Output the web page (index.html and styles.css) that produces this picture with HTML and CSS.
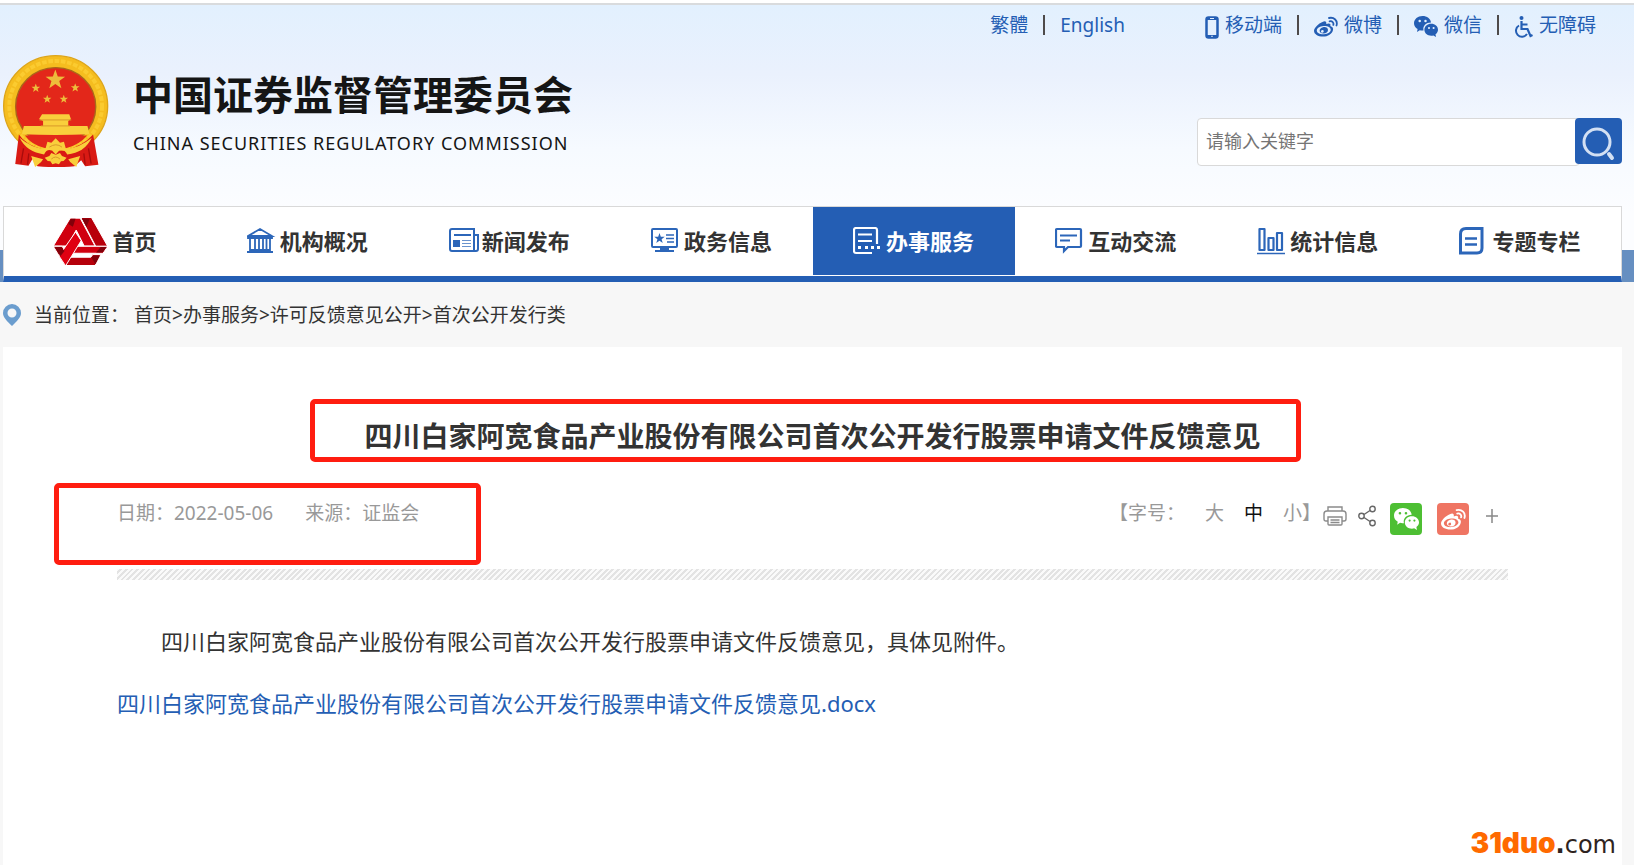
FILE: index.html
```html
<!DOCTYPE html>
<html lang="zh-CN">
<head>
<meta charset="utf-8">
<title>中国证券监督管理委员会</title>
<link rel="stylesheet" href="styles.css">
</head>
<body>
<svg class="defs" aria-hidden="true">
  <symbol id="star" viewBox="-10 -10 20 20"><path d="M0-10 2.400-3.200 9.500-3.100 3.800 1.200 5.900 8.100 0 4-5.900 8.100-3.800 1.200-9.500-3.100-2.400-3.200z"/></symbol>
  <symbol id="weibo" viewBox="0 0 24 22">
    <path fill="currentColor" fill-rule="evenodd" d="M8.500 6C11 4.600 12.700 5.300 12.300 8c2.600-1.100 5-.5 4 2 2.200.7 3.200 2 2.700 4-.9 4-5 6.600-10 6.600C4 20.600 0 18.300 0 14.800 0 12 4.500 7.500 8.500 6zM9.600 10c-4 .3-7 2.400-6.800 4.800.2 2.300 3.300 3.800 7.200 3.500 4-.3 7-2.400 6.700-4.800-.2-2.300-3.200-3.800-7.100-3.500z"/>
    <path fill="currentColor" fill-rule="evenodd" d="M9 11.200c2.600-.7 5 .5 5 2.800 0 2.200-2 3.600-4.500 3.600-2.300 0-4-1.200-3.900-3 .1-1.600 1.500-2.900 3.400-3.400zM8.300 14a1.400 1.400 0 1 0 .1 2.800A1.400 1.400 0 0 0 8.300 14z"/>
    <path fill="none" stroke="currentColor" stroke-width="1.800" stroke-linecap="round" d="M15 2c5-1.200 9 2.700 7.500 7.500M15.600 5.300c2.600-.6 4.400 1.300 3.700 3.600"/>
  </symbol>
  <symbol id="wechat" viewBox="0 0 24 22">
    <path fill="currentColor" fill-rule="evenodd" d="M8.500 0C13 0 16.500 2.600 17 6.500c-5 0-8.500 3.500-7.500 8-1.200.2-2.500.1-3.700-.3L3 16l.6-2.900C1.300 11.700 0 9.700 0 7.300 0 3.200 3.800 0 8.500 0zM5.700 3.800a1.200 1.200 0 1 0 0 2.500 1.200 1.200 0 0 0 0-2.500zm5.800 0a1.200 1.200 0 1 0 0 2.500 1.200 1.200 0 0 0 0-2.500z"/>
    <path fill="currentColor" fill-rule="evenodd" d="M17.200 7.800c3.800 0 6.800 2.600 6.800 5.900 0 1.900-1 3.500-2.500 4.600l.5 2.700-2.600-1.500c-4.700 1.200-9-1.700-9-5.700 0-3.400 3-6 6.800-6zM15 11a1 1 0 1 0 0 2.100 1 1 0 0 0 0-2.100zm4.600 0a1 1 0 1 0 0 2.100 1 1 0 0 0 0-2.100z"/>
  </symbol>
</svg>

<header class="header">
  <nav class="toplinks" aria-label="快捷链接">
    <div class="group">
      <a href="#">繁體</a><span class="sep"></span><a href="#">English</a>
    </div>
    <div class="group">
      <a href="#"><svg class="i-phone" viewBox="0 0 14 23"><rect x="1.500" y="1.500" width="11" height="20" rx="2" fill="none" stroke="currentColor" stroke-width="2.500"/><path d="M2 2h10v2H2zM2 19h10v2H2z" fill="currentColor"/><path d="M5 2.500h4M6.200 20.300h1.600" stroke="#e4effd"/></svg>移动端</a><span class="sep"></span>
      <a href="#"><svg class="i-social"><use href="#weibo"/></svg>微博</a><span class="sep"></span>
      <a href="#"><svg class="i-social"><use href="#wechat"/></svg>微信</a><span class="sep"></span>
      <a href="#"><svg class="i-access" viewBox="0 0 19 22"><circle cx="7.500" cy="2" r="2" fill="currentColor"/><path d="M7.500 5v8h6l3 7 2-1M8 8.500h5.500" fill="none" stroke="currentColor" stroke-width="2.200"/><path d="M5 9.500a6 6 0 1 0 8 8.500" fill="none" stroke="currentColor" stroke-width="2"/></svg>无障碍</a>
    </div>
  </nav>

  <div class="masthead">
    <a class="brand" href="#">
      <svg class="emblem" viewBox="10 28 320 338" aria-hidden="true">
        <ellipse cx="169" cy="182" rx="157" ry="152" fill="#f5bd1f" stroke="#dda51a" stroke-width="4"/>
        <ellipse cx="169" cy="182" rx="140" ry="136" fill="none" stroke="#fbcb30" stroke-width="12" stroke-dasharray="14 5"/>
        <ellipse cx="169" cy="184" rx="121" ry="118" fill="#e3271a" stroke="#a9681a" stroke-width="4"/>
        <g fill="#edbd3b"><use href="#star" x="137" y="72" width="62" height="62"/><use href="#star" x="95" y="114" width="28" height="28"/><use href="#star" x="214" y="113" width="28" height="28"/><use href="#star" x="130" y="148" width="27" height="27"/><use href="#star" x="180" y="148" width="27" height="27"/></g>
        <path fill="#f9cf3c" d="M128 207h82l5 14-8 6v15h58l6 25q-102 5-204 0l6-25h58v-15l-12-6z"/>
        <path d="M120 224h96M124 242h88" stroke="#d9992a" stroke-width="3"/>
        <path fill="#d91a14" d="M58 268q20 32 76 46l60 3q58-14 88-49l16 91-40 5-12-18-20 18q-55 5-112 0l-15-22-12 20-40-5z"/>
        <path fill="#e3271a" d="M76 271h188q-24 28-62 38h-66q-40-10-60-38z"/>
        <path fill="#f9cf3c" d="M60 278q38 32 78 34l6-22 12 3 13-14 13 14 12-3 6 22q42-4 78-34-22 46-74 50-10-18-24-12l-11 12-11-12q-16-6-24 12-52-6-74-50z"/>
        <path fill="#f9cf3c" d="M136 338l14-5 6-9 13 5 13-5 6 9 14 5-9 10-8 1-6 9-10-3-10 3-6-9-8-1zM95 333l36 10-6 8-18 15zM243 333l-36 10 6 8 18 15z"/>
        <path d="M72 310l-8 46M88 325l-4 34M268 310l8 46M254 325l4 34" stroke="#a80c0c" stroke-width="4"/>
        <path d="M150 306q20-14 38 0M156 342q13-12 26 0" fill="none" stroke="#d9992a" stroke-width="3"/>
      </svg>
      <span class="brand-text">
        <span class="brand-cn">中国证券监督管理委员会</span>
        <span class="brand-en">CHINA SECURITIES REGULATORY COMMISSION</span>
      </span>
    </a>
    <form class="search" role="search">
      <input type="text" placeholder="请输入关键字" aria-label="关键字">
      <button type="button" aria-label="搜索"><svg viewBox="0 0 47 46"><circle cx="22" cy="24" r="13" fill="none" stroke="#d3e0f3" stroke-width="3"/><path d="M34 36l3 4" stroke="#d3e0f3" stroke-width="4" stroke-linecap="round"/></svg></button>
    </form>
  </div>

  <div class="navband">
    <nav class="mainnav" aria-label="主导航">
      <a href="#"><svg class="i-home" viewBox="13 12 160 141">
        <g stroke="#fff" stroke-width="3">
          <path fill="#d0000f" d="M62 12h30l45 84h-33L80 48 54 96H11z"/>
          <path fill="#b8000b" d="M94 10h32l49 87h-36z"/>
          <path fill="#b5000b" d="M11 97h26l25 33h62l6-8h24l-17 33H46z"/>
          <path fill="#d0000f" d="M80 97h95l-14 21H68z"/>
          <path fill="#e00012" d="M78 54l17 26-47 76-20-30z"/>
        </g>
        <path fill="#82000a" d="M64 14h14l-8 24-14-8zM97 13h24l-10 26zM15 99h20l10 12-13 16zM172 99l-12 17h-20l14-17zM132 125h20l-14 26-12-20z"/>
      </svg>首页</a>
      <a href="#"><svg class="i-nav" viewBox="0 0 33 28"><path d="M1 9l12-7 12 7zM1 9v2h24V9M3 25V12M23 25V12M8 12v12M12 12v12M16 12v12M19.500 12v12M0 25h26M3 23h20" fill="none" stroke="currentColor" stroke-width="1.800"/></svg>机构概况</a>
      <a href="#"><svg class="i-nav" viewBox="0 0 33 28"><path d="M25 24H3q-2 0-2-2V4q0-2 2-2h22zM25 8h4v14q0 2-2 2h-2M5 8h17" fill="none" stroke="currentColor" stroke-width="2"/><path d="M4 13h7v7H4z" fill="currentColor"/><path d="M13 13.500h9M13 16.500h9M13 19.500h9" stroke="currentColor" opacity=".7"/></svg>新闻发布</a>
      <a href="#"><svg class="i-nav" viewBox="0 0 33 28"><rect x="1" y="2" width="25" height="18" rx="1" fill="none" stroke="currentColor" stroke-width="2"/><use href="#star" x="3" y="6" width="11" height="11" fill="currentColor"/><path d="M15 8h8M15 11.500h8M16 15h7" stroke="currentColor" stroke-width="1.400"/><path d="M9 20h9v3h5v2H4v-2h5z" fill="currentColor"/></svg>政务信息</a>
      <a href="#" class="active" aria-current="page"><svg class="i-nav" viewBox="0 0 33 28"><path d="M19 26H3q-2 0-2-2V3q0-2 2-2h19q2 0 2 2v14M5 7.500h14M5 14h14" fill="none" stroke="currentColor" stroke-width="2.200"/><path d="M5 20.500h3M12 20.500h3M18 20.500h3M24 20.500h3" stroke="currentColor" stroke-width="3"/></svg>办事服务</a>
      <a href="#"><svg class="i-nav" viewBox="0 0 33 28"><path d="M2 2h23q1 0 1 1v16q0 1-1 1H13l-4 4v-4H2q-1 0-1-1V3q0-1 1-1z" fill="none" stroke="currentColor" stroke-width="2.200"/><path d="M5 8.500h17M5 13.500h10" stroke="currentColor" stroke-width="2"/></svg>互动交流</a>
      <a href="#"><svg class="i-nav" viewBox="0 0 33 28"><path d="M2.500 2h5v21h-5zM11.500 11h5v12h-5zM20 6h5v17h-5z" fill="none" stroke="currentColor" stroke-width="2.200" stroke-linejoin="round"/><path d="M0 26.500h28" stroke="currentColor" stroke-width="1.500"/></svg>统计信息</a>
      <a href="#"><svg class="i-nav" viewBox="0 0 33 28"><path d="M7 1.500h16V21q0 5-5 5H1.500V7q0-5.500 5.500-5.500z" fill="none" stroke="currentColor" stroke-width="3"/><path d="M6 11.500h12M6 17.500h12" stroke="currentColor" stroke-width="2.500"/></svg>专题专栏</a>
    </nav>
  </div>
</header>

<main class="page">
  <nav class="crumbs" aria-label="当前位置">
    <svg class="i-pin" viewBox="0 0 18 22"><path fill="#6b9dce" fill-rule="evenodd" d="M9 0a9 9 0 0 1 9 9c0 4.500-4 8-9 13C4 17 0 13.500 0 9a9 9 0 0 1 9-9zm0 4.500a4.500 4.500 0 1 0 0 9 4.500 4.500 0 0 0 0-9z"/></svg>
    <span class="crumb-label">当前位置：</span>
    <span><a href="#">首页</a>&gt;<a href="#">办事服务</a>&gt;<a href="#">许可反馈意见公开</a>&gt;<a href="#">首次公开发行类</a></span>
  </nav>

  <article class="article">
    <div class="title-row">
      <h1>四川白家阿宽食品产业股份有限公司首次公开发行股票申请文件反馈意见</h1>
      <span class="mark mark-title"></span>
    </div>
    <div class="meta">
      <span>日期：2022-05-06</span>
      <span>来源：证监会</span>
      <div class="tools">
        <span class="sizes">【字号：<button type="button">大</button><button type="button" class="on">中</button><button type="button">小</button>】</span>
        <button type="button" aria-label="打印"><svg class="i-print" viewBox="0 0 24 22" fill="none" stroke="#8b8b8b" stroke-width="1.400"><path d="M5 6V2h14v4M5 16H3q-2 0-2-2V9q0-3 3-3h16q3 0 3 3v5q0 2-2 2h-2M5 12h14v7q0 1-1 1H6q-1 0-1-1zM7.500 15h9M7.500 17.500h9"/></svg></button>
        <button type="button" aria-label="分享"><svg class="i-share" viewBox="0 0 18 22" fill="none" stroke="#666" stroke-width="1.400"><circle cx="3.500" cy="11" r="2.700"/><circle cx="14.500" cy="4" r="2.700"/><circle cx="14.500" cy="18" r="2.700"/><path d="M6 9.500l6-4M6 12.500l6 4"/></svg></button>
        <button type="button" class="badge wechat" aria-label="分享到微信"><svg><use href="#wechat"/></svg></button>
        <button type="button" class="badge weibo" aria-label="分享到微博"><svg><use href="#weibo"/></svg></button>
        <button type="button" aria-label="更多"><svg class="i-plus" viewBox="0 0 12 16"><path d="M0 8h12M6 1v14" stroke="#888" stroke-width="1.500"/></svg></button>
      </div>
      <span class="mark mark-meta"></span>
    </div>
    <div class="stripe"></div>
    <p class="lead">四川白家阿宽食品产业股份有限公司首次公开发行股票申请文件反馈意见，具体见附件。</p>
    <p><a href="#">四川白家阿宽食品产业股份有限公司首次公开发行股票申请文件反馈意见.docx</a></p>
  </article>
  <div class="watermark"><b>31duo</b><strong>.</strong>com</div>
</main>
</body>
</html>
```

FILE: styles.css
```css
* { box-sizing: border-box; }
body {
  margin: 0;
  min-height: 100vh;
  display: flex;
  flex-direction: column;
  background: #f7f7f7;
  color: #333;
  font-family: "Noto Sans", "Noto Sans CJK SC", sans-serif;
  font-size: 19px;
  line-height: 28px;
}
a { color: inherit; text-decoration: none; }
button { padding: 0; border: 0; background: none; font: inherit; color: inherit; cursor: pointer; }
svg { display: block; flex: none; }
.defs { position: absolute; width: 0; height: 0; }

/* Header */
.header {
  margin-top: 3px;
  border-top: 2px solid #d9dbdd;
  background: linear-gradient(#e2f0fe, #eaf1fd 25%, #f6faff 52%, #fcfdff 75%);
  box-shadow: 0 -3px #fff;
}
.toplinks {
  display: flex;
  justify-content: flex-end;
  gap: 80px;
  padding: 6px 38px 0 0;
  color: #245eb4;
}
.group { display: flex; align-items: center; }
.group a { display: flex; align-items: center; gap: 6px; }
.sep { width: 2px; height: 20px; margin: 0 15px; background: #4e4a4a; }
.i-phone { width: 14px; height: 23px; }
.i-social { width: 24px; height: 22px; }
.i-access { width: 19px; height: 22px; }
.group svg { margin-top: 4px; }

.masthead {
  display: flex;
  justify-content: space-between;
  align-items: flex-start;
  padding: 16px 12px 0 3px;
}
.brand { display: flex; gap: 24px; color: #151515; }
.emblem { width: 106px; height: 112px; }
.brand-text { display: flex; flex-direction: column; padding-top: 16px; }
.brand-cn { font-size: 40px; line-height: 48px; font-weight: 700; }
.brand-en { margin-top: 10px; font-size: 18px; line-height: 28px; letter-spacing: 1px; }
.search { display: flex; width: 425px; margin-top: 63px; }
.search input {
  flex: 1;
  min-width: 0;
  height: 48px;
  padding: 0 8px 2px;
  border: 1px solid #d9d9d9;
  border-radius: 4px;
  background: #fff;
  font: inherit;
  font-size: 18px;
}
.search input::placeholder { color: #757575; }
.search button { width: 47px; height: 46px; margin-left: -5px; border-radius: 4px; background: #245eb4; }

/* Main navigation */
.navband {
  margin-top: 39px;
  padding: 0 12px 0 3px;
  background: linear-gradient(transparent 44px, #668fc1 44px);
}
.mainnav {
  display: grid;
  grid-template-columns: repeat(8, 1fr);
  border: 1px solid #d9d9d9;
  border-bottom: 6px solid #245eb4;
  padding-bottom: 1px;
  background: #fff;
}
.mainnav a {
  display: flex;
  align-items: center;
  justify-content: center;
  height: 68px;
  font-size: 22px;
  font-weight: 700;
}
.mainnav svg { color: #2c66b9; }
.i-nav { width: 33px; height: 28px; }
.mainnav .i-home { width: 53px; height: 47px; margin-right: 6px; }
.mainnav .active, .mainnav .active svg { background: #245eb4; color: #fff; }

/* Page */
.page { position: relative; flex: 1; display: flex; flex-direction: column; padding: 0 12px 0 3px; }
.crumbs { display: flex; align-items: center; height: 65px; }
.i-pin { width: 18px; height: 22px; margin-right: 13px; }
.crumb-label { margin-right: 5px; }
.article { flex: 1; padding: 67px 114px 0; background: #fff; }
.title-row { position: relative; }
h1 { margin: 0; font-size: 28px; line-height: 44px; font-weight: 700; text-align: center; }
.mark { position: absolute; border: 5px solid #ff1d10; border-radius: 5px; pointer-events: none; }
.mark-title { top: -15px; bottom: -4px; left: 193px; right: 207px; }
.meta { position: relative; display: flex; gap: 32px; margin-top: 41px; color: #999; }
.mark-meta { top: -16px; left: -63px; width: 427px; height: 82px; }
.tools { display: flex; align-items: center; height: 34px; margin-left: auto; padding-right: 10px; }
.sizes { display: flex; gap: 20px; align-self: flex-start; margin-right: 2px; }
.sizes button:last-of-type { margin-right: -20px; }
.sizes .on { color: #111; }
.i-print { width: 24px; height: 22px; margin-right: 11px; }
.i-share { width: 18px; height: 22px; margin-right: 14px; }
.badge { display: grid; place-items: center; width: 32px; height: 32px; margin-top: 6px; margin-right: 15px; border-radius: 4px; color: #fff; }
.badge svg { width: 25px; height: 23px; }
.wechat { background: #4dbf33; }
.weibo { background: #ef7563; }
.i-plus { width: 12px; height: 16px; margin-left: 2px; }
.stripe {
  height: 11px;
  margin: 36px 0 45px;
  background: repeating-linear-gradient(135deg, #fafafa 0 2px, #e3e3e3 2px 4px);
}
.article p { margin: 0 0 30px; font-size: 22px; line-height: 32px; }
.article .lead { text-indent: 2em; }
.article p a { color: #245eb4; }
.watermark {
  position: absolute;
  right: 18px;
  bottom: 6px;
  color: #2e2320;
  font-family: "DejaVu Sans", sans-serif;
  font-size: 24px;
}
.watermark b { color: #ff6a00; font-family: "Inter", sans-serif; font-size: 28px; font-weight: 900; }
```
